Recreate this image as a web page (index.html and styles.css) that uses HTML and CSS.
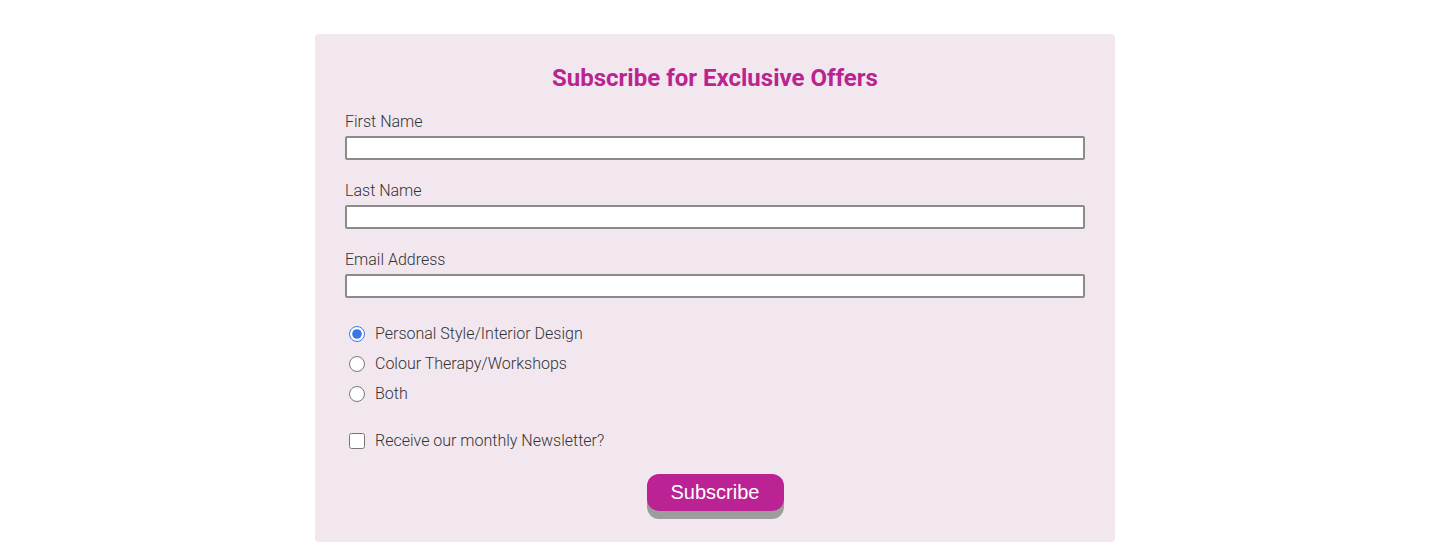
FILE: index.html
```html
<!DOCTYPE html>
<html>
<head>
<meta charset="utf-8">
<link rel="stylesheet" href="styles.css">
</head>
<body>
<form class="card">
  <h2 class="title">Subscribe for Exclusive Offers</h2>
  <div class="field">
    <label class="label" for="fn">First Name</label>
    <input class="input" id="fn" type="text">
  </div>
  <div class="field">
    <label class="label" for="ln">Last Name</label>
    <input class="input" id="ln" type="text">
  </div>
  <div class="field">
    <label class="label" for="em">Email Address</label>
    <input class="input" id="em" type="text">
  </div>
  <div class="radios">
    <label class="option"><input type="radio" name="int" checked> <span>Personal Style/Interior Design</span></label>
    <label class="option"><input type="radio" name="int"> <span>Colour Therapy/Workshops</span></label>
    <label class="option"><input type="radio" name="int"> <span>Both</span></label>
  </div>
  <label class="option check"><input type="checkbox"> <span>Receive our monthly Newsletter?</span></label>
  <div class="actions">
    <button class="btn" type="button">Subscribe</button>
  </div>
</form>
</body>
</html>
```
FILE: styles.css
```css
html, body { margin: 0; padding: 0; background: #fff; }
body { font-family: Roboto, "Liberation Sans", sans-serif; color: #3a3a3a; }
.card {
  width: 800px;
  box-sizing: border-box;
  margin: 34px 0 0 315px;
  background: #f2e6ef;
  border-radius: 4px;
  padding: 30px 30px 22px;
  height: 508px;
}
.title {
  margin: 0 0 20px;
  text-align: center;
  font-size: 24px;
  line-height: 28px;
  font-weight: 700;
  color: #b8258f;
}
.field { display: flex; flex-direction: column; margin-bottom: 21px; }
.label { font-size: 16px; font-weight: 300; line-height: 19px; margin-bottom: 5px; color: #333; }
.input {
  width: 740px; height: 24px; box-sizing: border-box;
  border: 2px solid #8b8b8b; border-radius: 2px; background: #fff;
  margin: 0; padding: 1px 2px;
}
.radios { display: flex; flex-direction: column; gap: 11px; margin-top: 26px; margin-bottom: 28px; }
.option { display: flex; align-items: center; font-size: 16px; font-weight: 300; line-height: 19px; color: #333; }
.option input { margin: 0 10px 0 4px; width: 16px; height: 16px; }
.option input[type=radio] { accent-color: #3b74e8; }
.actions { display: flex; justify-content: center; margin-top: 24px; }
.btn {
  font-family: "Liberation Sans", Arial, sans-serif;
  font-size: 20px;
  color: #fff;
  background: #bb2293;
  border: none;
  border-radius: 12px;
  width: 137px;
  height: 37px;
  box-shadow: 0 8px 0 #9d9d9d;
  cursor: pointer;
}
```
